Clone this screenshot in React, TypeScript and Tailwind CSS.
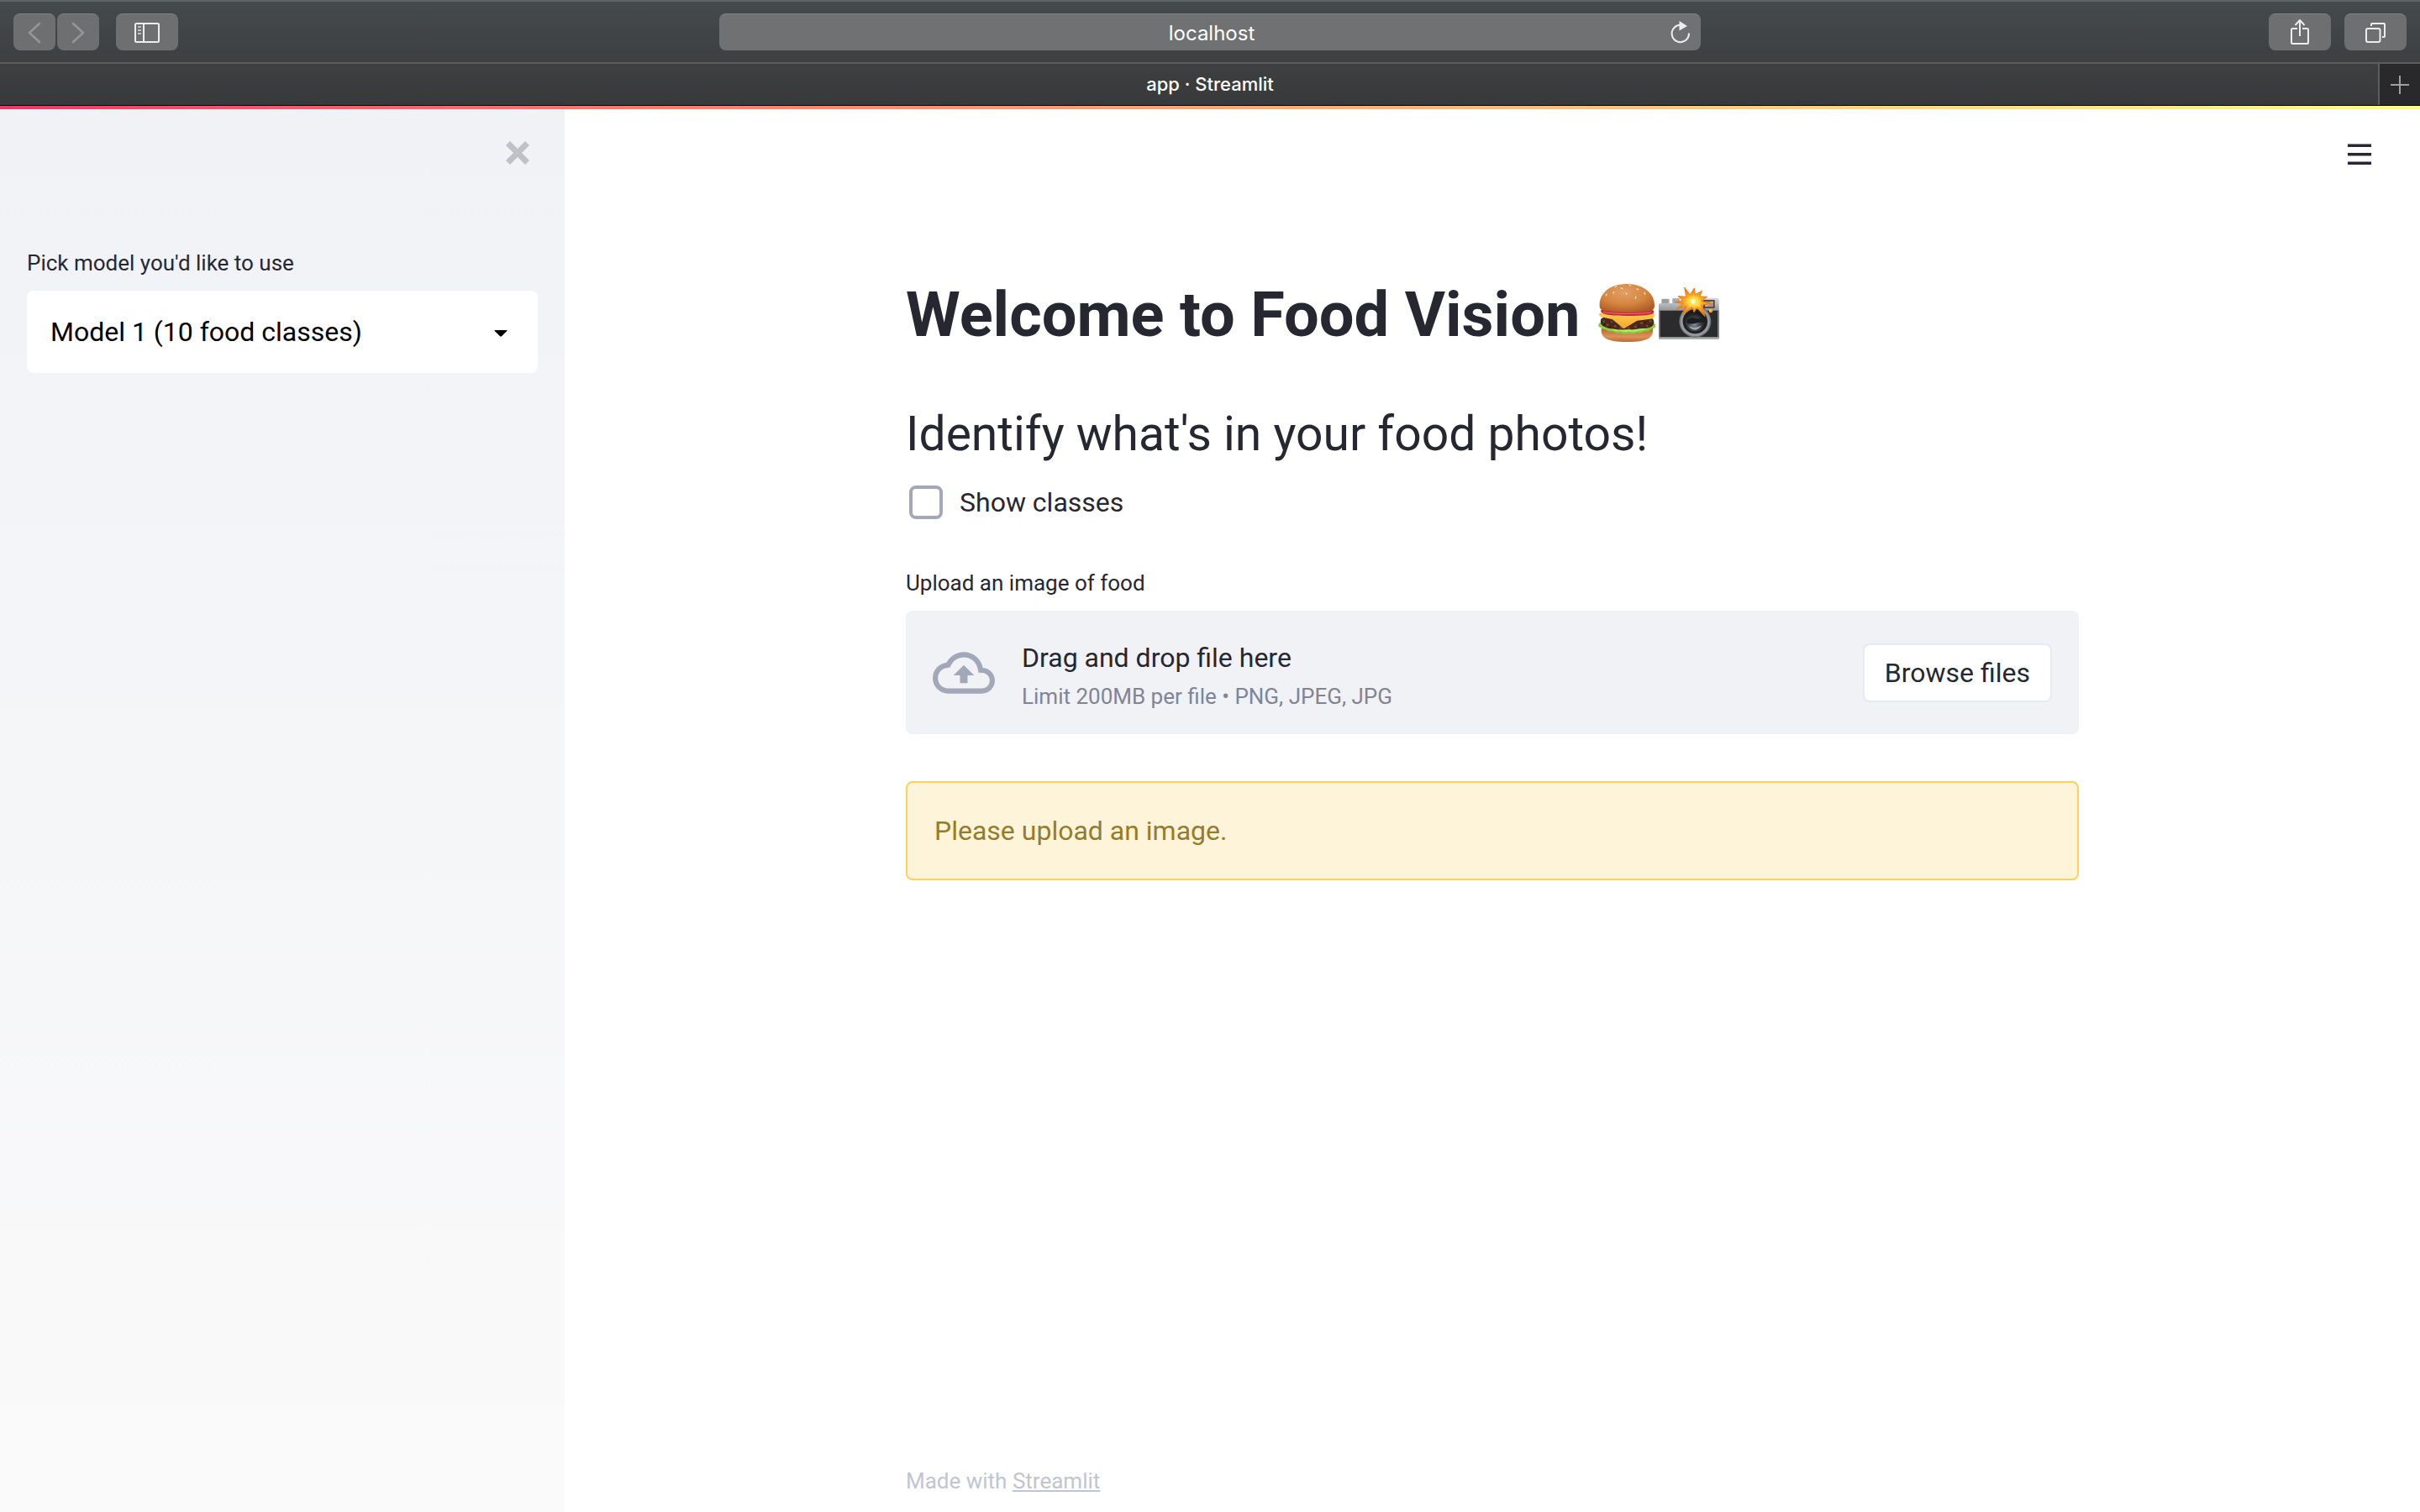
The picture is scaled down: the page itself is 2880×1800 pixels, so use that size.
import React, { useRef, useState } from "react";

const toolbarButton =
  "flex h-11 items-center justify-center rounded-lg border-t border-[#838486] bg-[#6e6f71]";

function ChevronIcon({ flip = false }: { flip?: boolean }) {
  return (
    <svg
      width="16"
      height="26"
      viewBox="0 0 16 26"
      fill="none"
      stroke="#959698"
      strokeWidth="2.6"
      strokeLinecap="round"
      strokeLinejoin="round"
      aria-hidden="true"
    >
      <path d={flip ? "M2 2L14 13L2 24" : "M14 2L2 13L14 24"} />
    </svg>
  );
}

function SidebarIcon() {
  return (
    <svg width="30" height="24" viewBox="0 0 30 24" fill="none" stroke="#ededed" strokeWidth="2" aria-hidden="true">
      <rect x="1" y="1" width="28" height="22" rx="1.5" />
      <path d="M11 1V23" />
      <path d="M4 5H8M4 9H8M4 13H8" stroke="#bfc0c1" />
    </svg>
  );
}

function ReloadIcon() {
  return (
    <svg width="24" height="28" viewBox="0 0 24 28" fill="none" aria-hidden="true">
      <path d="M22 15.5A10.2 10.2 0 1 1 12 5.8" stroke="#ededed" strokeWidth="2" />
      <path d="M10.5 1L20 7L10.5 12.5Z" fill="#ededed" />
    </svg>
  );
}

function ShareIcon() {
  return (
    <svg
      width="22"
      height="30"
      viewBox="0 0 22 30"
      fill="none"
      stroke="#ededed"
      strokeWidth="2"
      strokeLinejoin="round"
      aria-hidden="true"
    >
      <path d="M8 11H2.500Q1 11 1 12.500V27.500Q1 29 2.500 29H19.500Q21 29 21 27.500V12.500Q21 11 19.500 11H14" />
      <path d="M11 1V20M5.500 7L11 1L16.500 7" />
    </svg>
  );
}

function TabsIcon() {
  return (
    <svg width="24" height="24" viewBox="0 0 24 24" fill="none" stroke="#ededed" strokeWidth="2" aria-hidden="true">
      <rect x="1" y="7" width="16.500" height="16" rx="2" />
      <path d="M7 4V1.800Q7 1 7.800 1H22.200Q23 1 23 1.800V16.200Q23 17 22.200 17H20" />
    </svg>
  );
}

function BurgerIcon() {
  return (
    <svg width="69" height="71" viewBox="65 50 207 213" role="img" aria-label="hamburger">
      <defs>
        <radialGradient id="bun" cx="0.45" cy="0.3" r="0.75">
          <stop offset="0" stopColor="#e3a066" />
          <stop offset="0.55" stopColor="#d5853f" />
          <stop offset="1" stopColor="#a95a24" />
        </radialGradient>
        <linearGradient id="heel" x1="0" y1="0" x2="0" y2="1">
          <stop offset="0" stopColor="#b5682f" />
          <stop offset="0.6" stopColor="#dc9358" />
          <stop offset="1" stopColor="#b76a38" />
        </linearGradient>
        <linearGradient id="cheese" x1="0" y1="0" x2="0" y2="1">
          <stop offset="0" stopColor="#ffcf56" />
          <stop offset="1" stopColor="#f2a62a" />
        </linearGradient>
      </defs>
      <path d="M76 212C74 242 88 260 168 260C250 260 262 242 260 212Z" fill="url(#heel)" />
      <path
        d="M70 192C64 200 64 208 74 208C80 218 92 212 98 220C108 226 114 218 124 226C134 232 142 224 152 230C162 236 170 226 182 230C192 234 200 224 212 228C220 230 226 220 238 222C246 224 250 214 260 212C270 212 272 200 266 194Z"
        fill="#7fd13c"
      />
      <path
        d="M78 206C90 208 96 214 104 215C116 214 122 222 134 222C146 218 154 226 166 224C180 220 190 226 200 222C214 218 226 220 236 214C248 210 256 208 262 200L72 198Z"
        fill="#b4ec68"
      />
      <path
        d="M74 182C72 196 76 204 92 208C104 216 120 212 132 216C148 218 160 214 176 216C194 218 208 212 224 212C246 212 264 206 264 190C264 176 254 172 240 172H92C80 172 75 176 74 182Z"
        fill="#4b2a1c"
      />
      <g fill="#784630">
        <circle cx="86" cy="187" r="4" />
        <circle cx="98" cy="199" r="5" />
        <circle cx="113" cy="188" r="4" />
        <circle cx="126" cy="204" r="5" />
        <circle cx="146" cy="210" r="4" />
        <circle cx="174" cy="211" r="4" />
        <circle cx="198" cy="206" r="5" />
        <circle cx="220" cy="193" r="5" />
        <circle cx="240" cy="203" r="4" />
        <circle cx="252" cy="186" r="5" />
      </g>
      <g fill="#2c160e">
        <circle cx="88" cy="197" r="3" />
        <circle cx="108" cy="206" r="3" />
        <circle cx="138" cy="198" r="3" />
        <circle cx="210" cy="204" r="3" />
        <circle cx="232" cy="190" r="3" />
        <circle cx="252" cy="199" r="3" />
      </g>
      <path d="M68 160C72 154 90 152 110 152H230C252 152 264 154 266 162C266 172 262 178 252 178L204 184L162 210C158 213 154 212 150 208L116 180L82 172C72 170 67 166 68 160Z" fill="url(#cheese)" />
      <path d="M74 150C74 144 88 142 104 144L244 144C258 144 266 148 264 155C260 164 230 167 168 167C110 167 78 164 74 150Z" fill="#cc2638" />
      <path d="M84 153C110 161 220 162 254 154" stroke="#f27179" strokeWidth="3" fill="none" />
      <path d="M70 132C68 88 104 54 166 53C230 53 268 90 266 132C266 146 254 150 238 151C190 158 140 156 92 149C78 147 70 144 70 132Z" fill="url(#bun)" />
      <g fill="#f6dfb8" stroke="#b97137" strokeWidth="0.8">
        <ellipse cx="94" cy="92" rx="3" ry="6" transform="rotate(25 94 92)" />
        <ellipse cx="128" cy="63" rx="3" ry="5" transform="rotate(65 128 63)" />
        <ellipse cx="120" cy="84" rx="3" ry="6" transform="rotate(20 120 84)" />
        <ellipse cx="149" cy="69" rx="3" ry="6" transform="rotate(-65 149 69)" />
        <ellipse cx="166" cy="88" rx="3" ry="6" transform="rotate(-20 166 88)" />
        <ellipse cx="178" cy="58" rx="3" ry="5" transform="rotate(-70 178 58)" />
        <ellipse cx="199" cy="102" rx="3" ry="6" transform="rotate(10 199 102)" />
        <ellipse cx="206" cy="72" rx="3" ry="6" transform="rotate(-60 206 72)" />
        <ellipse cx="231" cy="87" rx="3" ry="6" transform="rotate(-30 231 87)" />
      </g>
    </svg>
  );
}

function CameraIcon() {
  return (
    <svg width="74" height="71" viewBox="278 50 222 213" role="img" aria-label="camera with flash">
      <defs>
        <linearGradient id="metal" x1="0" y1="0" x2="0" y2="1">
          <stop offset="0" stopColor="#d7d9db" />
          <stop offset="1" stopColor="#8f9294" />
        </linearGradient>
        <radialGradient id="flash" cx="0.5" cy="0.5" r="0.5">
          <stop offset="0" stopColor="#ffffff" />
          <stop offset="0.2" stopColor="#ffe85a" />
          <stop offset="0.45" stopColor="#ffab22" />
          <stop offset="1" stopColor="#ee7014" />
        </radialGradient>
        <radialGradient id="glass" cx="0.45" cy="0.65" r="0.6">
          <stop offset="0" stopColor="#8b9095" />
          <stop offset="0.5" stopColor="#3e4246" />
          <stop offset="1" stopColor="#15171a" />
        </radialGradient>
      </defs>
      <rect x="291" y="106" width="28" height="22" rx="3" fill="#a6a8aa" />
      <rect x="329" y="104" width="28" height="22" rx="3" fill="#b9bbbd" />
      <path d="M296 107V124M303 107V124M310 107V124M336 106V122M343 106V122M350 106V122" stroke="#828486" strokeWidth="2" />
      <path d="M281 130Q281 122 289 122H356L362 103H488Q496 103 496 111V152H281Z" fill="url(#metal)" />
      <path d="M281 148H496V246Q496 250 490 250H287Q281 250 281 246Z" fill="#2b2b2d" />
      <path d="M281 148H286V248H281ZM491 148H496V248H491Z" fill="#7c7e80" />
      <path d="M281 243H496V247Q496 251 490 251H287Q281 251 281 247Z" fill="#a9abad" />
      <rect x="440" y="110" width="41" height="30" rx="2" fill="#4b4341" />
      <rect x="446" y="115" width="30" height="20" fill="#a0948c" />
      <path d="M448 133L474 117" stroke="#cbc2ba" strokeWidth="4" />
      <circle cx="467" cy="149" r="7" fill="#e9a81e" />
      <circle cx="465" cy="147" r="3" fill="#ffd968" />
      <circle cx="411" cy="187" r="57" fill="#6e7073" />
      <circle cx="411" cy="187" r="53" fill="#96999c" />
      <circle cx="411" cy="187" r="44" fill="#1e1f21" />
      <circle cx="411" cy="187" r="36" fill="url(#glass)" />
      <path d="M382 182Q396 170 413 176Q426 180 438 174L443 190Q424 188 410 194Q394 198 381 192Z" fill="#1b1d20" />
      <path d="M388 203Q410 216 434 201Q424 217 411 217Q396 217 388 203Z" fill="#a3a8ac" />
      <path
        d="M373 65L393 92L408 68L411 91L436 78L427 98L454 99L432 114L474 123L435 129L446 169L417 138L407 154L401 136L365 162L380 134L343 142L368 124L338 118L368 113L350 97L379 99Z"
        fill="url(#flash)"
        stroke="#ee7d16"
        strokeWidth="3"
      />
      <path
        d="M390 94L399 108L406 92L409 107L422 98L417 111L434 113L419 118L430 138L413 125L404 138L400 124L384 136L392 121L372 122L388 115L376 107L392 109Z"
        fill="#ffdf4a"
      />
      <circle cx="404" cy="116" r="8" fill="#fffce0" />
    </svg>
  );
}

function CloudUploadIcon() {
  return (
    <svg width="74" height="74" viewBox="0 0 24 24" fill="#a3a8b8" className="shrink-0" aria-hidden="true">
      <path d="M19.350 10.040C18.670 6.590 15.640 4 12 4 9.110 4 6.600 5.640 5.350 8.040 2.340 8.360 0 10.910 0 14c0 3.310 2.690 6 6 6h13c2.760 0 5-2.240 5-5 0-2.640-2.050-4.780-4.650-4.960zM19 18H6c-2.210 0-4-1.790-4-4 0-2.050 1.530-3.760 3.560-3.970l1.070-.110.500-.950C8.080 7.140 9.940 6 12 6c2.620 0 4.880 1.860 5.390 4.430l.300 1.500 1.530.110c1.560.100 2.780 1.410 2.780 2.960 0 1.650-1.350 3-3 3zM8 13h2.550v3h2.900v-3H16l-4-4z" />
    </svg>
  );
}

function BrowserChrome() {
  return (
    <header className="font-['Inter',sans-serif] text-white">
      <div className="flex h-[76px] items-start justify-between border-t-2 border-b-2 border-t-[#606466] border-b-[#5b5e60] bg-linear-to-b from-[#454a4c] to-[#3d3f41] px-4 pt-[14px]">
        <div className="flex flex-1">
          <button type="button" aria-label="Back" className={toolbarButton + " w-[50px]"}>
            <ChevronIcon />
          </button>
          <button type="button" aria-label="Forward" className={toolbarButton + " ml-[2px] w-[50px]"}>
            <ChevronIcon flip />
          </button>
          <button type="button" aria-label="Show sidebar" className={toolbarButton + " ml-5 w-[74px]"}>
            <SidebarIcon />
          </button>
        </div>
        <div className="relative w-[41%]">
          <input
            type="text"
            aria-label="Address"
            defaultValue="localhost"
            className="h-11 w-full rounded-lg border-t border-[#838486] bg-[#707173] pt-[2px] pr-12 pl-[52px] text-center text-[24px] outline-none"
          />
          <button type="button" aria-label="Reload" className="absolute inset-y-0 right-3 flex items-center">
            <ReloadIcon />
          </button>
        </div>
        <div className="flex flex-1 justify-end gap-4">
          <button type="button" aria-label="Share" className={toolbarButton + " w-[74px] pb-[2px]"}>
            <ShareIcon />
          </button>
          <button type="button" aria-label="Show all tabs" className={toolbarButton + " w-[74px]"}>
            <TabsIcon />
          </button>
        </div>
      </div>
      <div className="flex h-[50px] border-b border-b-black bg-linear-to-b from-[#3d3f41] to-[#38393b]">
        <div className="w-[50px]" />
        <div className="flex flex-1 items-center justify-center text-[22px] font-medium">app · Streamlit</div>
        <button
          type="button"
          aria-label="New tab"
          className="flex w-[50px] items-center justify-center border-l-2 border-[#5b5e60] bg-[#29292b]"
        >
          <svg width="22" height="22" viewBox="0 0 22 22" stroke="#a0a0a1" strokeWidth="2" aria-hidden="true">
            <path d="M11 0V22M0 11H22" />
          </svg>
        </button>
      </div>
    </header>
  );
}

function Sidebar() {
  return (
    <aside className="w-[672px] shrink-0 bg-linear-to-b from-[#f0f2f6] to-[#fafafa] px-8">
      <div className="flex justify-end pt-[38px] pr-[10px]">
        <button type="button" aria-label="Close sidebar">
          <svg width="28" height="28" viewBox="0 0 28 28" stroke="#bfc1c6" strokeWidth="7" aria-hidden="true">
            <path d="M2.500 2.500L25.500 25.500M25.500 2.500L2.500 25.500" />
          </svg>
        </button>
      </div>
      <label htmlFor="model" className="mt-24 block text-[26px] leading-[42px]">
        Pick model you'd like to use
      </label>
      <div className="relative mt-3">
        <select
          id="model"
          className="h-[98px] w-full appearance-none rounded-lg bg-white px-7 text-[32px] text-black outline-none"
        >
          <option>Model 1 (10 food classes)</option>
          <option>Model 2 (11 food classes)</option>
          <option>Model 3 (11 food classes + non-food class)</option>
        </select>
        <svg
          width="16"
          height="8"
          viewBox="0 0 16 8"
          className="pointer-events-none absolute top-[47px] right-9"
          aria-hidden="true"
        >
          <path d="M1 0H15Q16 0 15.300 1L9 7.300Q8 8.200 7 7.300L.700 1Q0 0 1 0Z" fill="#000" />
        </svg>
      </div>
    </aside>
  );
}

function FileUploader() {
  const fileInput = useRef<HTMLInputElement>(null);
  return (
    <div className="mt-[55px]">
      <label htmlFor="upload" className="block text-[26px] leading-[42px]">
        Upload an image of food
      </label>
      <input ref={fileInput} id="upload" type="file" accept=".png,.jpeg,.jpg" className="hidden" />
      <section className="mt-3 flex min-h-[147px] items-center rounded-lg bg-[#f0f2f6] px-8">
        <CloudUploadIcon />
        <div className="ml-8 flex flex-1 flex-col gap-[6px] pt-[2px]">
          <span className="text-[32px] leading-[48px]">Drag and drop file here</span>
          <span className="text-[26px] leading-[32px] text-[#808495]">Limit 200MB per file • PNG, JPEG, JPG</span>
        </div>
        <button
          type="button"
          onClick={() => fileInput.current?.click()}
          className="h-[70px] rounded-lg border-2 border-[#e6eaf1] bg-white px-6 text-[32px]"
        >
          Browse files
        </button>
      </section>
    </div>
  );
}

export default function App() {
  const [showClasses, setShowClasses] = useState(false);
  return (
    <div className="flex min-h-screen flex-col bg-white font-['Roboto',sans-serif] text-[#262730]">
      <BrowserChrome />
      <div className="h-1 bg-linear-to-r from-[#f63366] to-[#fffd80]" />
      <div className="flex flex-1">
        <Sidebar />
        <div className="flex flex-1 flex-col">
          <div className="flex justify-end pt-[41px] pr-[58px]">
            <button type="button" aria-label="Main menu">
              <svg width="28" height="25" viewBox="0 0 28 25" fill="#262730" aria-hidden="true">
                <path d="M0 .500H28V4H0ZM0 11H28V14.500H0ZM0 21.500H28V25H0Z" />
              </svg>
            </button>
          </div>
          <main className="mx-auto flex w-full max-w-[1460px] flex-1 flex-col px-8">
            <h1 className="mt-[135px] flex items-center gap-[22px] text-[74px] leading-[88px] font-bold">
              Welcome to Food Vision
              <span className="flex gap-[2px] pb-[6px]">
                <BurgerIcon />
                <CameraIcon />
              </span>
            </h1>
            <h2 className="mt-[62px] text-[57px] leading-[72px]">Identify what's in your food photos!</h2>
            <label className="mt-[25px] ml-1 flex items-center gap-5 self-start text-[32px] leading-[40px]">
              <input
                type="checkbox"
                checked={showClasses}
                onChange={(e) => setShowClasses(e.target.checked)}
                className="size-10 appearance-none rounded-lg border-4 border-[#a3a8b8] bg-white checked:bg-[#f63366]"
              />
              Show classes
            </label>
            <FileUploader />
            <div
              role="alert"
              className="mt-14 rounded-lg border-2 border-[#ffd15c] bg-[#fef4d9] p-8 text-[32px] leading-[50px] text-[#947c2d]"
            >
              Please upload an image.
            </div>
            <footer className="mt-auto pb-4 text-[26px] leading-[42px] text-[#bfc5d3]">
              Made with{" "}
              <a href="https://streamlit.io" className="underline decoration-2 underline-offset-2">
                Streamlit
              </a>
            </footer>
          </main>
        </div>
      </div>
    </div>
  );
}
